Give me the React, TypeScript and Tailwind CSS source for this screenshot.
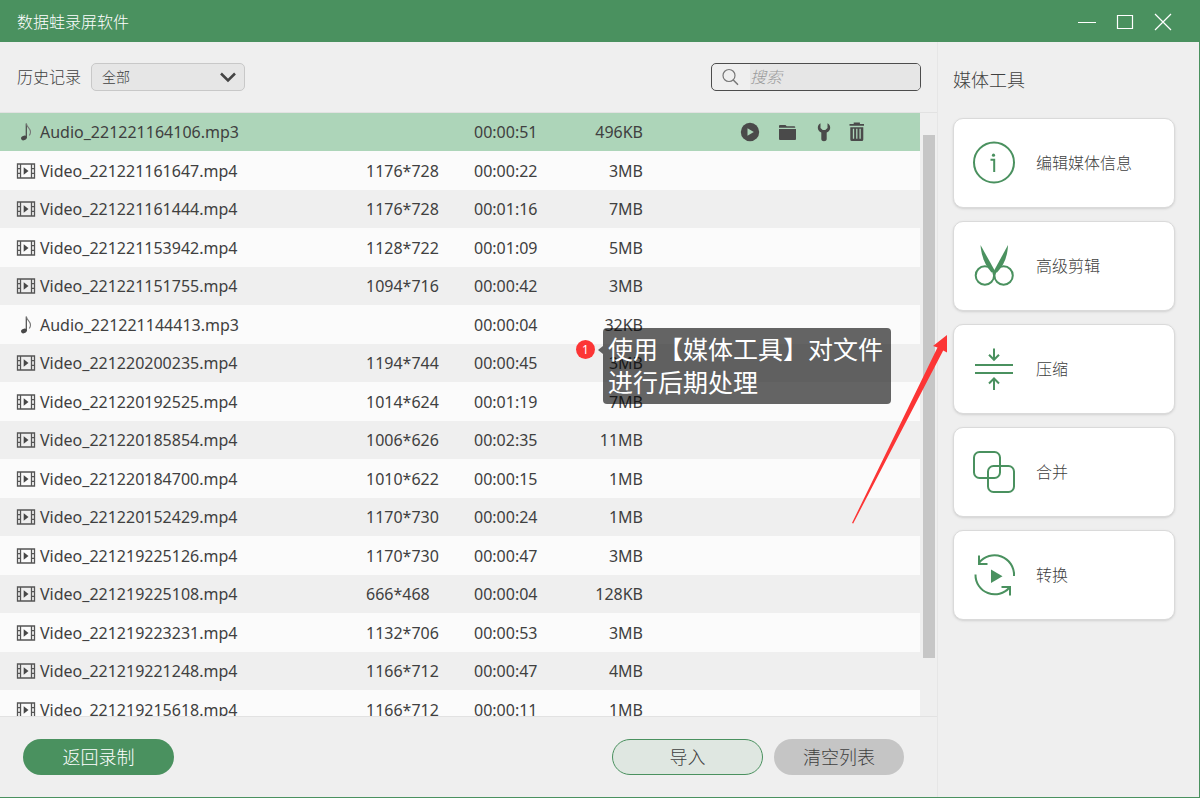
import React, { useState } from "react";

interface MediaFile {
  name: string;
  size: string;
  duration: string;
  resolution?: string;
}

const files: MediaFile[] = [
  { name: "Audio_221221164106.mp3", duration: "00:00:51", size: "496KB" },
  { name: "Video_221221161647.mp4", resolution: "1176*728", duration: "00:00:22", size: "3MB" },
  { name: "Video_221221161444.mp4", resolution: "1176*728", duration: "00:01:16", size: "7MB" },
  { name: "Video_221221153942.mp4", resolution: "1128*722", duration: "00:01:09", size: "5MB" },
  { name: "Video_221221151755.mp4", resolution: "1094*716", duration: "00:00:42", size: "3MB" },
  { name: "Audio_221221144413.mp3", duration: "00:00:04", size: "32KB" },
  { name: "Video_221220200235.mp4", resolution: "1194*744", duration: "00:00:45", size: "3MB" },
  { name: "Video_221220192525.mp4", resolution: "1014*624", duration: "00:01:19", size: "7MB" },
  { name: "Video_221220185854.mp4", resolution: "1006*626", duration: "00:02:35", size: "11MB" },
  { name: "Video_221220184700.mp4", resolution: "1010*622", duration: "00:00:15", size: "1MB" },
  { name: "Video_221220152429.mp4", resolution: "1170*730", duration: "00:00:24", size: "1MB" },
  { name: "Video_221219225126.mp4", resolution: "1170*730", duration: "00:00:47", size: "3MB" },
  { name: "Video_221219225108.mp4", resolution: "666*468", duration: "00:00:04", size: "128KB" },
  { name: "Video_221219223231.mp4", resolution: "1132*706", duration: "00:00:53", size: "3MB" },
  { name: "Video_221219221248.mp4", resolution: "1166*712", duration: "00:00:47", size: "4MB" },
  { name: "Video_221219215618.mp4", resolution: "1166*712", duration: "00:00:11", size: "1MB" },
];

function NoteIcon() {
  return (
    <svg width="20" height="20" viewBox="0 0 20 20" className="shrink-0">
      <ellipse cx="7.900" cy="16" rx="2.900" ry="2.200" transform="rotate(-20 7.900 16)" fill="#484848" />
      <path d="M10.300 16V1.500" stroke="#484848" strokeWidth="1.200" />
      <path d="M10.500 2c.4 3.400 4 4.300 4 8 0 1.400-.5 2.500-1.200 3.500" fill="none" stroke="#777" strokeWidth="1.100" />
    </svg>
  );
}

function FilmIcon() {
  return (
    <svg width="20" height="20" viewBox="0 0 20 20" className="shrink-0">
      <path
        d="M1.500 3h17v14h-17zM4.500 3v14M15.500 3v14M1.500 7.700h3M1.500 12.300h3M15.500 7.700h3M15.500 12.300h3"
        fill="none"
        stroke="#555"
        strokeWidth="1.300"
      />
      <path d="M7.700 6.300v7.400l4.800-3.700z" fill="#484848" />
    </svg>
  );
}

function RowActions() {
  return (
    <div className="flex items-center gap-[17px] text-[#4a4a4a]">
      <button aria-label="播放">
        <svg width="20" height="20" viewBox="0 0 20 20" className="block">
          <circle cx="10" cy="10" r="9.200" fill="currentColor" />
          <path d="M7.500 6.300v7.400l6.300-3.700z" fill="#add5b9" />
        </svg>
      </button>
      <button aria-label="打开文件夹">
        <svg width="20" height="20" viewBox="-1 0 20 20" className="block">
          <path d="M1 4q0-1 1-1h5.500l1.200 1.200h7.500q1 0 1 .8v.7h-16.200z" fill="currentColor" />
          <path d="M1 7h17v10q0 1-1 1h-15q-1 0-1-1z" fill="currentColor" />
        </svg>
      </button>
      <button aria-label="工具">
        <svg width="18" height="20" viewBox="-1 0 18 20" className="block">
          <path
            d="M5.500 1.300v4.700l2.200 2h2.600l2.200-2v-4.700c1.600.9 2.700 2.500 2.700 4.400 0 2-1.200 3.800-3.500 4.800v6.500c0 3-5.400 3-5.400 0v-6.500c-2.300-1-3.500-2.800-3.500-4.800 0-1.900 1.100-3.500 2.700-4.400z"
            fill="currentColor"
          />
        </svg>
      </button>
      <button aria-label="删除">
        <svg width="16" height="20" viewBox="0 0 16 20" className="block">
          <path d="M.5 2.900h14.500M4.700 1.300h6.200" fill="none" stroke="currentColor" strokeWidth="1.600" />
          <path d="M1.300 5.300h13v12.200q0 1.500-1.500 1.500h-10q-1.500 0-1.500-1.500z" fill="currentColor" />
          <path d="M4.500 6.800v10M7.800 6.800v10M11.100 6.800v10" stroke="#add5b9" strokeWidth="1.300" />
        </svg>
      </button>
    </div>
  );
}

const tools = [
  {
    label: "编辑媒体信息",
    icon: (
      <>
        <circle cx="22" cy="21.500" r="20" />
        <path d="M18.500 18.800h3.700v12.200" />
        <circle cx="21.500" cy="14.200" r="1.600" fill="#4a915f" stroke="none" />
      </>
    ),
  },
  {
    label: "高级剪辑",
    icon: (
      <>
        <circle cx="12.900" cy="31.500" r="9.200" />
        <circle cx="31.600" cy="31.500" r="9.200" />
        <path d="M8.500 1l14.500 26-3.500 1.500c-6-7-10-15-11-27.500z" fill="#4a915f" stroke="none" />
        <path d="M36 1l-15 27.500 4 0c6.500-7 10.500-15 11-27.500z" fill="#4a915f" stroke="none" />
      </>
    ),
  },
  {
    label: "压缩",
    icon: (
      <path d="M3 18h38M3 26h38M22 1.500v11M17 7.800l5 5 5-5M22 43v-11.500M17 36.500l5-5 5 5" />
    ),
  },
  {
    label: "合并",
    icon: (
      <>
        <rect x="2" y="2" width="26" height="26" rx="5.500" />
        <rect x="16" y="16" width="26" height="26" rx="5.500" />
      </>
    ),
  },
  {
    label: "转换",
    icon: (
      <>
        <path d="M7 10a19.500 19.500 0 0 1 35 13M3.500 21.500a19.300 19.300 0 0 0 34 13" />
        <path d="M7 2.500v8.500h8.500M29.500 34h8.500v8.500" />
        <path d="M19 16.500v13.500l11.500-6.800z" fill="#4a915f" stroke="none" />
      </>
    ),
  },
];

function ToolCard({ label, icon }: { label: string; icon: React.ReactNode }) {
  return (
    <button className="flex h-[90px] w-full items-center gap-5 rounded-[10px] border border-[#dadada] bg-white px-[18px] text-left text-base shadow-sm">
      <svg width="44" height="44" viewBox="0 0 44 44" fill="none" stroke="#4a915f" strokeWidth="2">
        {icon}
      </svg>
      {label}
    </button>
  );
}

function Callout() {
  return (
    <>
      <div className="absolute top-[328px] left-[576px] flex items-start">
        <span className="mt-3 flex size-[19px] items-center justify-center rounded-full bg-[#fc3535] text-xs text-white">
          1
        </span>
        <svg width="5" height="8" viewBox="0 0 5 8" className="mt-[18px] ml-[3px]">
          <path d="M5 0v8l-5-4z" fill="#000" fillOpacity="0.600" />
        </svg>
        <p className="w-[288px] rounded-sm bg-black/60 px-[5px] py-[5px] text-[25px] leading-[33px] text-white">
          使用【媒体工具】对文件
          <br />
          进行后期处理
        </p>
      </div>
      <svg width="98" height="190" viewBox="0 0 98 190" className="pointer-events-none absolute top-[334px] left-[850px]">
        <path d="M97 1l-14 11 4.500 1.500-85.500 175.500 1.200.5 90-173 3.800 2z" fill="#fc3535" />
      </svg>
    </>
  );
}

export default function App() {
  const [filter, setFilter] = useState("全部");
  const [keyword, setKeyword] = useState("");

  return (
    <div className="relative flex h-screen flex-col overflow-hidden border-r border-b border-[#4a915f] bg-[#efefef] font-['Noto_Sans','Noto_Sans_CJK_SC',sans-serif] text-[#404040]">
      <header className="flex h-[42px] shrink-0 items-center justify-between bg-[#4a915f] pt-px pr-[27px] pl-[17px] text-white">
        <h1 className="text-base font-light">数据蛙录屏软件</h1>
        <div className="flex items-center gap-5">
          <button aria-label="最小化">
            <svg width="18" height="18" viewBox="0 0 18 18" className="block">
              <path d="M0 9.500h18" stroke="white" />
            </svg>
          </button>
          <button aria-label="最大化">
            <svg width="18" height="18" viewBox="0 0 18 18" className="block">
              <path d="M1.500 2.500h15v13h-15z" fill="none" stroke="white" strokeWidth="1.200" />
            </svg>
          </button>
          <button aria-label="关闭">
            <svg width="18" height="18" viewBox="0 0 18 18" className="block">
              <path d="M1 1l16 16M17 1l-16 16" stroke="white" strokeWidth="1.200" />
            </svg>
          </button>
        </div>
      </header>

      <div className="flex min-h-0 flex-1">
        <main className="flex min-w-0 flex-1 flex-col">
          <div className="flex h-[71px] shrink-0 items-center justify-between border-b border-[#e2e2e2] pr-4 pl-[17px]">
            <div className="flex items-center gap-[10px]">
              <label htmlFor="filter" className="text-base font-light">
                历史记录
              </label>
              <div className="relative">
                <select
                  id="filter"
                  value={filter}
                  onChange={(e) => setFilter(e.target.value)}
                  className="h-7 w-[154px] appearance-none rounded-[5px] border border-[#c8c8c8] bg-[#e6e6e6] pl-[10px] text-sm font-light"
                >
                  <option>全部</option>
                  <option>视频</option>
                  <option>音频</option>
                </select>
                <svg width="18" height="12" viewBox="0 0 18 12" className="pointer-events-none absolute top-2 right-2">
                  <path d="M2 2.500l7 7 7-7" fill="none" stroke="#444" strokeWidth="2.500" />
                </svg>
              </div>
            </div>
            <div className="flex h-7 w-[210px] items-center overflow-hidden rounded-[5px] border border-[#4d4d4d]">
              <svg width="18" height="18" viewBox="0 0 18 18" className="mx-[10px] shrink-0" fill="none" stroke="#777">
                <circle cx="7" cy="7.500" r="6" strokeWidth="1.200" />
                <path d="M11.300 12l4.700 4.700" strokeWidth="1.500" />
              </svg>
              <input
                type="text"
                aria-label="搜索"
                placeholder="搜索"
                value={keyword}
                onChange={(e) => setKeyword(e.target.value)}
                className="h-full min-w-0 flex-1 bg-[#e6e6e6] text-base font-light outline-none placeholder:text-[#999] placeholder:italic"
              />
            </div>
          </div>

          <div className="flex min-h-0 flex-1">
            <div className="min-w-0 flex-1 overflow-hidden">
              <table className="w-full table-fixed text-left text-base">
                <colgroup>
                  <col className="w-[366px]" />
                  <col className="w-[108px]" />
                  <col className="w-[82px]" />
                  <col className="w-[87px]" />
                  <col />
                </colgroup>
                <tbody>
                  {files.map((file, i) => (
                    <tr
                      key={file.name}
                      className="bg-[#efefef] odd:h-[38px] even:h-[39px] even:bg-[#fbfbfb] first:bg-[#add5b9]"
                    >
                      <td className="p-0 pl-4">
                        <div className="flex items-center gap-1">
                          {file.name.endsWith(".mp3") ? <NoteIcon /> : <FilmIcon />}
                          {file.name}
                        </div>
                      </td>
                      <td className="p-0">{file.resolution}</td>
                      <td className="p-0">{file.duration}</td>
                      <td className="p-0 text-right">{file.size}</td>
                      <td className="p-0 pl-[97px]">{i === 0 && <RowActions />}</td>
                    </tr>
                  ))}
                </tbody>
              </table>
            </div>
            <div className="flex w-[17px] shrink-0 flex-col pt-[22px] pr-[2px] pb-[58px] pl-[3px]">
              <div className="flex-1 bg-[#c6c6c6]" />
            </div>
          </div>

          <footer className="flex h-[81px] shrink-0 items-center border-t border-[#e2e2e2] pr-[33px] pl-[23px] text-lg font-light">
            <button className="h-9 w-[151px] rounded-full bg-[#4a915f] text-white">返回录制</button>
            <button className="mr-[11px] ml-auto h-9 w-[151px] rounded-full border border-[#4a915f] bg-[#dfe7e1]">
              导入
            </button>
            <button className="h-9 w-[130px] rounded-full bg-[#c5c5c5]">清空列表</button>
          </footer>
        </main>

        <aside className="w-[262px] shrink-0 border-l border-[#e6e6e6] pr-6 pl-[15px]">
          <h2 className="flex h-[76px] items-center text-lg font-light">媒体工具</h2>
          <div className="flex flex-col gap-[13px] font-light">
            {tools.map((tool) => (
              <ToolCard key={tool.label} label={tool.label} icon={tool.icon} />
            ))}
          </div>
        </aside>
      </div>

      <Callout />
    </div>
  );
}
